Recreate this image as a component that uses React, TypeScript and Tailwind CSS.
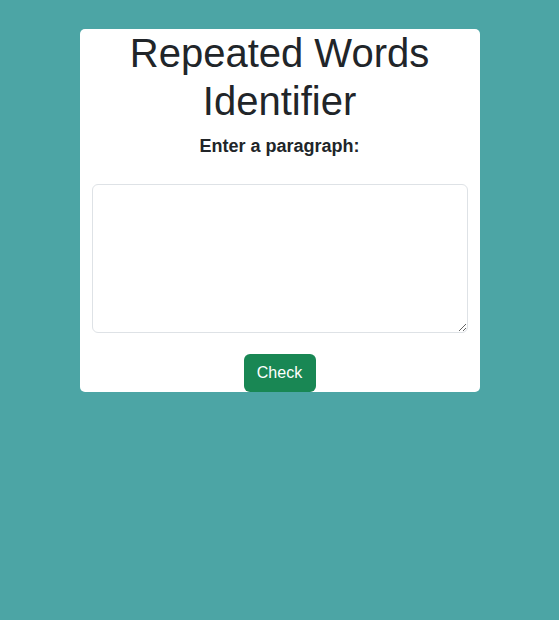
export default function App() {
  return (
    <div className="min-h-[620px] w-full bg-[#4ca5a5] pt-[29px] font-['Liberation_Sans',Arial,sans-serif] text-[#212529]">
      <div className="mx-auto flex h-[363px] w-[400px] flex-col items-center rounded-[5px] bg-white px-3">
        <h1 className="text-center text-[40px] font-normal leading-[48px]">
          Repeated Words Identifier
        </h1>
        <label
          htmlFor="para"
          className="mt-[8px] block text-[18px] font-bold leading-[27px]"
        >
          Enter a paragraph:
        </label>
        <textarea
          id="para"
          className="mt-[24px] block h-[150px] w-full rounded-[6px] border border-[#dee2e6] px-3 py-1.5 text-base outline-none"
        />
        <button className="mt-[21px] h-[38px] w-[72px] rounded-[6px] bg-[#198754] text-[16px] leading-6 text-white">
          Check
        </button>
      </div>
    </div>
  );
}
